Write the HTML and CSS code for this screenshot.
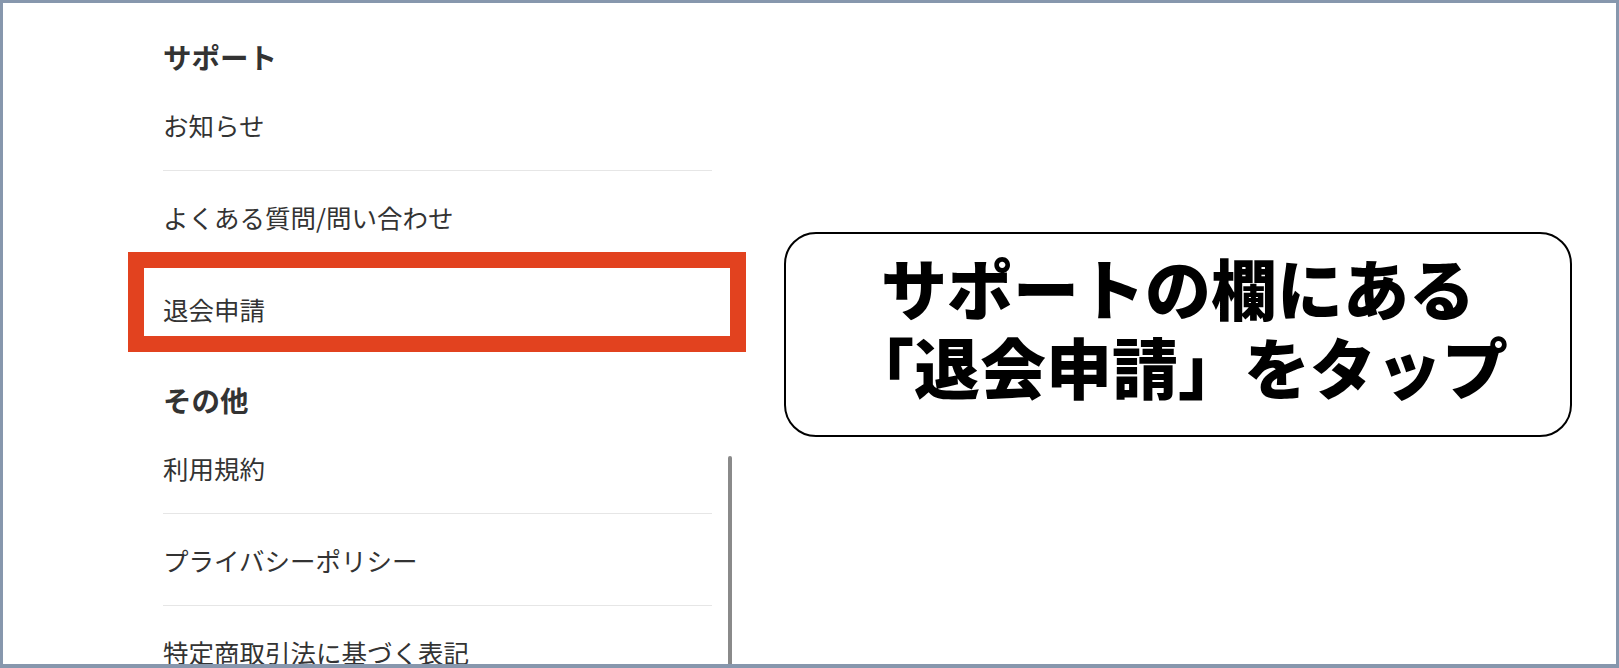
FILE: index.html
```html
<!DOCTYPE html>
<html lang="ja">
<head>
<meta charset="utf-8">
<title>退会申請</title>
<link rel="stylesheet" href="styles.css">
</head>
<body>
<div class="frame">
  <nav class="menu">
    <section class="section">
      <h2 class="section-title">サポート</h2>
      <ul class="list">
        <li class="item">お知らせ</li>
        <li class="item">よくある質問/問い合わせ</li>
        <li class="item item-marked">退会申請<span class="highlight"></span></li>
      </ul>
    </section>
    <section class="section">
      <h2 class="section-title">その他</h2>
      <ul class="list">
        <li class="item">利用規約</li>
        <li class="item">プライバシーポリシー</li>
        <li class="item">特定商取引法に基づく表記</li>
      </ul>
    </section>
  </nav>
  <div class="scrollbar"></div>
  <div class="callout">
    <p class="callout-text"><span class="callout-line">サポートの欄にある</span><span class="callout-line">「退会申請」をタップ</span></p>
  </div>
</div>
</body>
</html>
```

FILE: styles.css
```css
* {
  box-sizing: border-box;
}

html, body {
  margin: 0;
  padding: 0;
  background: #ffffff;
}

body {
  font-family: "Noto Sans CJK JP", "Noto Sans", sans-serif;
  color: #333333;
}

.frame {
  position: relative;
  width: 1619px;
  height: 668px;
  border: 3px solid #8797ad;
  border-bottom-width: 4px;
  background: #ffffff;
  overflow: hidden;
  display: flex;
  align-items: flex-start;
}

.menu {
  width: 709px;
  padding: 35px 0 0 160px;
  flex: none;
}

.section + .section {
  margin-top: 26px;
}

.section-title {
  margin: 0;
  height: 41px;
  line-height: 37px;
  font-size: 28.5px;
  font-weight: 700;
  color: #333333;
}

.list {
  list-style: none;
  margin: 0;
  padding: 0;
}

.item {
  position: relative;
  height: 92px;
  display: flex;
  align-items: center;
  padding-bottom: 1px;
  font-size: 25.5px;
  font-weight: 400;
  color: #333333;
  border-bottom: 1px solid #e6e6e6;
}

.item:last-child {
  border-bottom: none;
}

.highlight {
  position: absolute;
  top: -11px;
  left: -35px;
  right: -34px;
  height: 100px;
  border: 16px solid #e2421f;
}

.scrollbar {
  position: absolute;
  left: 725px;
  top: 453px;
  width: 4px;
  height: 230px;
  border-radius: 2px;
  background: #8a8a8a;
}

.callout {
  flex: none;
  margin: 229px 0 0 72px;
  width: 788px;
  height: 205px;
  border: 2.5px solid #000000;
  border-radius: 32px;
  padding-top: 13px;
  background: #ffffff;
}

.callout-text {
  margin: 0;
  text-align: center;
  white-space: nowrap;
  font-size: 66px;
  font-weight: 900;
  color: #000000;
}

.callout-line {
  display: block;
  height: 79px;
  line-height: 79px;
}
```
